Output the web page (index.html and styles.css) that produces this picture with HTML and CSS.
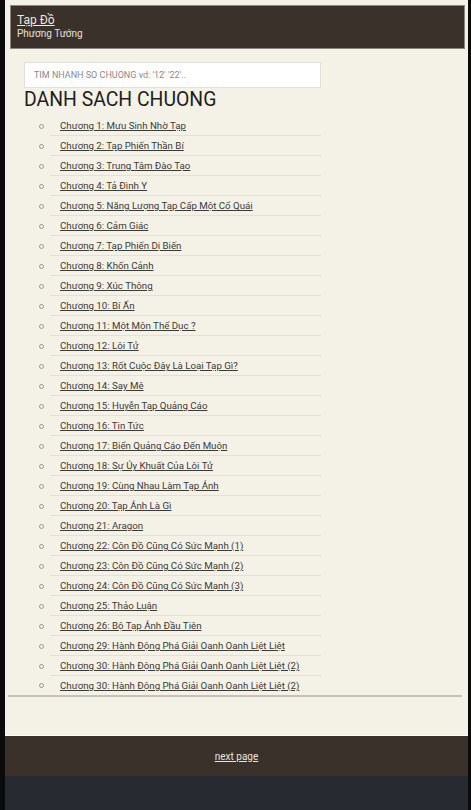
FILE: index.html
```html
<!DOCTYPE html>
<html lang="vi">
<head>
<meta charset="utf-8">
<title>Tạp Đồ</title>
<link rel="stylesheet" href="styles.css">
</head>
<body>
<div class="frame">
  <header class="top">
    <a class="title" href="#">Tạp Đồ</a>
    <div class="author">Phương Tướng</div>
  </header>
  <main class="main">
    <input class="search" type="text" placeholder="TIM NHANH SO CHUONG vd: '12' '22'..">
    <h1 class="heading">DANH SACH CHUONG</h1>
    <ul class="chapters">
      <li><a href="#">Chương 1: Mưu Sinh Nhờ Tạp</a></li>
      <li><a href="#">Chương 2: Tạp Phiến Thần Bí</a></li>
      <li><a href="#">Chương 3: Trung Tâm Đào Tạo</a></li>
      <li><a href="#">Chương 4: Tả Đình Y</a></li>
      <li><a href="#">Chương 5: Năng Lượng Tạp Cấp Một Cổ Quái</a></li>
      <li><a href="#">Chương 6: Cảm Giác</a></li>
      <li><a href="#">Chương 7: Tạp Phiến Dị Biến</a></li>
      <li><a href="#">Chương 8: Khốn Cảnh</a></li>
      <li><a href="#">Chương 9: Xúc Thông</a></li>
      <li><a href="#">Chương 10: Bí Ẩn</a></li>
      <li><a href="#">Chương 11: Một Môn Thể Dục ?</a></li>
      <li><a href="#">Chương 12: Lôi Tử</a></li>
      <li><a href="#">Chương 13: Rốt Cuộc Đây Là Loại Tạp Gì?</a></li>
      <li><a href="#">Chương 14: Say Mê</a></li>
      <li><a href="#">Chương 15: Huyễn Tạp Quảng Cáo</a></li>
      <li><a href="#">Chương 16: Tin Tức</a></li>
      <li><a href="#">Chương 17: Biển Quảng Cáo Đến Muộn</a></li>
      <li><a href="#">Chương 18: Sự Ủy Khuất Của Lôi Tử</a></li>
      <li><a href="#">Chương 19: Cùng Nhau Làm Tạp Ảnh</a></li>
      <li><a href="#">Chương 20: Tạp Ảnh Là Gì</a></li>
      <li><a href="#">Chương 21: Aragon</a></li>
      <li><a href="#">Chương 22: Côn Đồ Cũng Có Sức Mạnh (1)</a></li>
      <li><a href="#">Chương 23: Côn Đồ Cũng Có Sức Mạnh (2)</a></li>
      <li><a href="#">Chương 24: Côn Đồ Cũng Có Sức Mạnh (3)</a></li>
      <li><a href="#">Chương 25: Thảo Luận</a></li>
      <li><a href="#">Chương 26: Bộ Tạp Ảnh Đầu Tiên</a></li>
      <li><a href="#">Chương 29: Hành Động Phá Giải Oanh Oanh Liệt Liệt</a></li>
      <li><a href="#">Chương 30: Hành Động Phá Giải Oanh Oanh Liệt Liệt (2)</a></li>
      <li><a href="#">Chương 30: Hành Động Phá Giải Oanh Oanh Liệt Liệt (2)</a></li>
    </ul>
  </main>
  <div class="divider"></div>
  <div class="spacer"></div>
  <footer class="pager">
    <a href="#">next page</a>
  </footer>
  <div class="bottom"></div>
</div>
</body>
</html>
```
FILE: styles.css
```css
html, body {
  margin: 0;
  padding: 0;
}
body {
  background: #0b0b0b;
  font-family: Roboto, "Noto Sans", sans-serif;
}
.frame {
  margin: 0 3px 0 5px;
  min-height: 810px;
  display: flex;
  flex-direction: column;
  background: #f4f1e7;
}
.top {
  margin: 5px 3px 0 5px;
  padding: 7px 6px 7px;
  background: #3b312b;
  border: 1px solid #8c8680;
}
.title {
  display: block;
  color: #ece8e2;
  font-size: 12px;
  line-height: 14px;
  text-decoration: underline;
}
.author {
  color: #e4e0da;
  font-size: 10px;
  line-height: 14px;
}
.main {
  padding: 13px 0 0 19px;
}
.search {
  display: block;
  box-sizing: border-box;
  width: 297px;
  height: 26px;
  margin: 0;
  padding: 0 9px;
  border: 1px solid #e2e0dc;
  background: #ffffff;
  font-family: Roboto, sans-serif;
  font-size: 9px;
  outline: none;
}
.search::placeholder {
  color: #8a8a8a;
}
.heading {
  margin: 0;
  font-size: 19.4px;
  line-height: 24px;
  font-weight: 400;
  color: #1e1e1e;
}
.chapters {
  list-style: none;
  margin: 4px 0 0 0;
  padding: 0;
  width: 297px;
}
.chapters li {
  display: flex;
  align-items: center;
}
.chapters li::before {
  content: "";
  box-sizing: border-box;
  width: 5px;
  height: 5px;
  margin: 0 6px 0 15px;
  border: 1px solid #9a9894;
  border-radius: 50%;
  flex: none;
}
.chapters a {
  flex: 1;
  display: block;
  height: 19px;
  line-height: 19px;
  padding-left: 10px;
  border-bottom: 1px solid #e4e0d6;
  color: #3a3a3a;
  font-size: 9.7px;
  text-decoration: underline;
  white-space: nowrap;
}
.chapters li:last-child a {
  border-bottom: none;
}
.divider {
  height: 2px;
  margin: 0 6px 0 3px;
  background: #c6c2ba;
}
.spacer {
  height: 38px;
  border-bottom: 1px solid #ffffff;
}
.pager {
  height: 40px;
  background: #3b312b;
  display: flex;
  align-items: center;
  justify-content: center;
}
.pager a {
  color: #e8e4de;
  font-size: 10px;
  text-decoration: underline;
}
.bottom {
  flex: 1;
  background: #272b31;
}
```
